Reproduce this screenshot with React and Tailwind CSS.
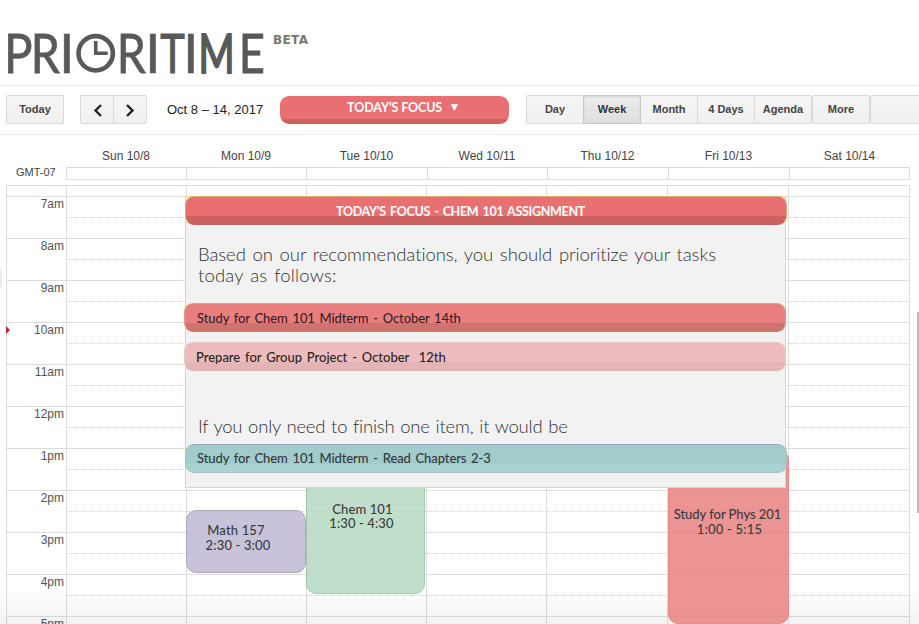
import React from "react";

const days = ["Sun 10/8", "Mon 10/9", "Tue 10/10", "Wed 10/11", "Thu 10/12", "Fri 10/13", "Sat 10/14"];
const hours = ["7am", "8am", "9am", "10am", "11am", "12pm", "1pm", "2pm", "3pm", "4pm", "5pm"];
const bodyCols = "grid grid-cols-[60px_120px_120px_120px_120px_121px_121px_122px]";
const headCols = "grid grid-cols-[120px_120px_121px_120px_121px_121px_121px]";

// Each wordmark letter: left edge of its advance box, horizontal scale, stroke.
const wordmark = [
  ["P", 4, 0.88, 0.8],
  ["R", 30.8, 0.86, 0.8],
  ["I", 59.2, 1, 0.6],
  ["R", 116.8, 0.86, 0.8],
  ["I", 145.2, 1, 0.6],
  ["T", 160.3, 0.77, 1],
  ["I", 183.2, 1, 0.6],
  ["M", 198.4, 0.72, 2],
  ["E", 238.8, 0.84, 0.8],
];

function Logo() {
  return (
    <svg width="320" height="65" viewBox="0 20 320 65" className="block overflow-visible" fill="#595959">
      <g fontFamily="Lato, sans-serif" fontSize="54" stroke="#595959">
        {wordmark.map(([ch, x, s, w]) => (
          <text key={x} strokeWidth={w} transform={`translate(${x} 72.5) scale(${s} 1)`}>{ch}</text>
        ))}
      </g>
      <circle cx="95.7" cy="53.3" r="17.2" fill="none" stroke="#595959" strokeWidth="4.6" />
      <path d="M95.7 41v12.3h12" fill="none" stroke="#595959" strokeWidth="3.6" />
      <text x="273" y="44" fontFamily="DejaVu Sans, sans-serif" fontWeight="700" fontSize="12" fill="#777" textLength="35">BETA</text>
    </svg>
  );
}

function ToolButton({ className = "", active = false, children }) {
  const tone = active
    ? "relative border-[#c8c8c8] from-[#ececec] to-[#dedede] text-[#333] shadow-[inset_0_1px_2px_rgba(0,0,0,0.1)]"
    : "border-[#d9d9d9] from-[#f5f5f5] to-[#f0f0f0] text-[#444]";
  return (
    <div className={`flex h-[29px] shrink-0 items-center justify-center border bg-gradient-to-b text-[11px] font-bold ${tone} ${className}`}>
      {children}
    </div>
  );
}

function Chevron({ d }) {
  return (
    <svg width="12" height="14" viewBox="0 0 12 14" fill="none" stroke="#222" strokeWidth="2.4">
      <path d={d} />
    </svg>
  );
}

function Toolbar() {
  return (
    <div className="flex h-[50px] items-start border-y border-[#ebebeb] pt-[9px]">
      <ToolButton className="ml-[6px] w-[58px] rounded-[2px]">Today</ToolButton>
      <ToolButton className="ml-4 w-[34px] rounded-l-[2px] pl-px"><Chevron d="M9 2L3.5 7.5L9 13" /></ToolButton>
      <ToolButton className="-ml-px w-[34px] rounded-r-[2px]"><Chevron d="M3 2L8.5 7.5L3 13" /></ToolButton>
      <div className="ml-5 w-[113px] shrink-0 whitespace-nowrap text-[13px] leading-[29px] text-[#222]">Oct 8 – 14, 2017</div>
      <div className="mt-px flex h-7 w-[229px] shrink-0 items-center justify-center rounded-[9px] bg-[linear-gradient(#e87072_23px,#cb6260_23px)] pb-[3px] pl-4 font-['Lato'] text-[12.5px] font-bold tracking-[-0.12px] text-white">
        <span>TODAY’S FOCUS</span>
        <span className="-mt-[2px] ml-[9px] font-['DejaVu_Sans'] text-[9px]">▼</span>
      </div>
      <ToolButton className="ml-[17px] w-[58px] rounded-l-[2px]">Day</ToolButton>
      <ToolButton active className="-ml-px w-[58px]">Week</ToolButton>
      <ToolButton className="-ml-px w-[58px]">Month</ToolButton>
      <ToolButton className="-ml-px w-[58px]">4 Days</ToolButton>
      <ToolButton className="-ml-px w-[58px] rounded-r-[2px]">Agenda</ToolButton>
      <ToolButton className="w-[58px] rounded-[2px]">More</ToolButton>
      <ToolButton className="w-[60px] rounded-[2px]" />
    </div>
  );
}

function DayHeader() {
  return (
    <div className="flex h-[50px] text-[#444]">
      <div className="w-[66px] pl-4 pt-[31px] text-[11px] leading-[13px]">GMT-07</div>
      <div>
        <div className={`${headCols} h-8 text-center text-xs leading-[42px]`}>
          {days.map((d) => <div key={d}>{d}</div>)}
        </div>
        <div className={`${headCols} h-[13px] border-y border-[#ddd]`}>
          {days.map((d) => <div key={d} className="border-l border-[#ddd] last:border-r" />)}
        </div>
      </div>
    </div>
  );
}

function HourGrid() {
  return (
    <>
      <div className={`${bodyCols} h-[11px] border-t border-[#ddd]`}>
        <div className="border-l border-[#ddd]" />
        {days.map((d) => <div key={d} className="border-l border-[#ddd] last:border-r" />)}
      </div>
      {hours.map((h) => (
        <div key={h} className={`${bodyCols} h-[42px]`}>
          <div className="border-l border-t border-[#ddd] pr-[2px] text-right text-xs leading-[15px] text-[#555]">{h}</div>
          {days.map((d) => (
            <div key={d} className="border-l border-t border-[#ddd] last:border-r">
              <div className="h-[21px] border-b border-dotted border-[#d4d4d4]" />
            </div>
          ))}
        </div>
      ))}
    </>
  );
}

function Bar({ className, children }) {
  return (
    <div className={`absolute h-[29px] w-[602px] whitespace-pre rounded-[9px] border text-[13px] font-medium ${className}`}>
      {children}
    </div>
  );
}

function FocusPanel() {
  return (
    <div className="absolute left-[185px] top-[11px] h-[292px] w-[601px] border border-[#e0d998] bg-[#f2f2f2] font-['Lato'] text-[#333]">
      <Bar className="-left-px -top-px border-[#dda878] border-b-[#cb6260] bg-[linear-gradient(#e87072_19px,#cb6260_19px)] pl-[150px] leading-[28px] text-white">
        <span className="text-[12.5px] font-bold tracking-[-0.3px] [word-spacing:1.4px]">TODAY’S FOCUS - CHEM 101 ASSIGNMENT</span>
      </Bar>
      <p className="absolute left-[12px] top-[47px] whitespace-nowrap text-[18.5px] font-light leading-[21px] tracking-[-0.08px] [word-spacing:1.8px]">
        Based on our recommendations, you should prioritize your tasks<br /><span className="tracking-[0.15px]">today as follows:</span>
      </p>
      <Bar className="-left-[2px] top-[106px] border-[#dfa17d] border-b-[#cf7270] bg-[linear-gradient(#e87e7e_19px,#cf7270_19px)] pl-3 leading-[28px] tracking-[-0.1px] text-[#332222] [word-spacing:1.6px]">
        Study for Chem 101 Midterm - October 14th
      </Bar>
      <Bar className="-left-[2px] top-[145px] border-[#e8cbb8] border-b-[#e3b3b4] bg-[linear-gradient(#eebcbe_19px,#e4b5b7_19px)] pl-[11px] leading-[28px] tracking-[-0.02px] text-[#2c2525] [word-spacing:1.6px]">
        Prepare for Group Project - October  12th
      </Bar>
      <p className="absolute left-[12px] top-[219px] whitespace-nowrap text-[18.5px] font-light leading-[21px] tracking-[-0.22px] [word-spacing:1px]">
        If you only need to finish one item, it would be
      </p>
      <Bar className="-left-px top-[247px] border-[#a4c3c8] border-t-[#a2a5c3] bg-[linear-gradient(#a2cbcc_19px,#abd2d2_19px)] pl-[11px] leading-[26px] tracking-[-0.1px] text-[#303a3a] [word-spacing:1.6px]">
        Study for Chem 101 Midterm - Read Chapters 2-3
      </Bar>
    </div>
  );
}

function EventCard({ className, title, time, timeClass = "" }) {
  return (
    <div className={`absolute rounded-[10px] border text-center font-['Lato'] text-[13px] font-medium text-[#3c3c3c] ${className}`}>
      <div className="whitespace-nowrap">{title}</div>
      <div className={timeClass}>{time}</div>
    </div>
  );
}

export default function App() {
  return (
    <div className="relative h-[624px] w-[919px] overflow-hidden bg-white font-['Liberation_Sans',Arial,sans-serif]">
      <div className="h-[85px] pt-5"><Logo /></div>
      <Toolbar />
      <DayHeader />
      <div className="relative h-[439px] overflow-hidden">
        <div className="w-[910px] pl-[6px]"><HourGrid /></div>
        <div className="absolute inset-x-0 bottom-0 h-9 bg-gradient-to-b from-transparent to-black/5" />
        <EventCard className="left-[186px] top-[325px] h-[63px] w-[120px] border-[#b9a5b5] bg-[#beb9d4]/85 pr-5 pt-[12px] leading-[15px] tracking-[0.15px]" title="Math 157" time="2:30 - 3:00" timeClass="pl-1" />
        <EventCard className="left-[306px] top-[270px] h-[139px] w-[119px] border-[#9ecbad] bg-[#b5d9c2]/85 pr-[6px] pt-[46px] leading-[14px] tracking-[0.1px]" title="Chem 101" time="1:30 - 4:30" timeClass="-ml-[2px]" />
        <EventCard className="left-[668px] top-[265px] h-[174px] w-[121px] border-[#e98b89] bg-[#e98080]/85 pr-[2px] pt-[56px] leading-[15px] tracking-[-0.05px]" title="Study for Phys 201" time="1:00 - 5:15" timeClass="pl-[4px] tracking-[0.2px]" />
        <FocusPanel />
        <div className="absolute left-[6px] top-[141px] h-0 w-0 border-y-4 border-l-4 border-y-transparent border-l-[#c8202f]" />
      </div>
      <div className="absolute left-0 top-[269px] h-[19px] w-[2px] bg-[#ececec]" />
      <div className="absolute right-0 top-[312px] h-[201px] w-[2px] bg-[#bdbdbd]" />
    </div>
  );
}
